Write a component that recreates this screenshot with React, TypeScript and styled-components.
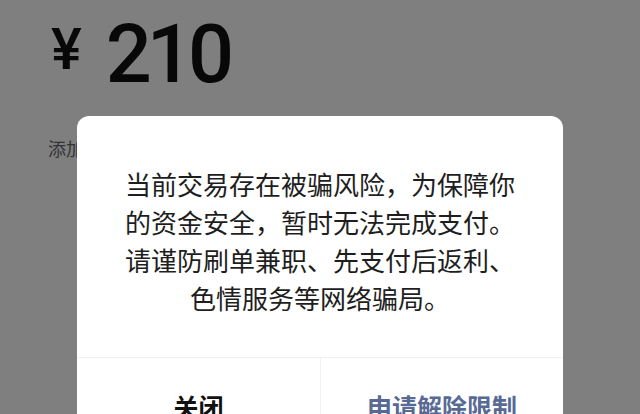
import React from "react";
import styled, { createGlobalStyle } from "styled-components";

const GlobalStyle = createGlobalStyle`
  html, body {
    margin: 0;
    padding: 0;
    background: #ffffff;
    overflow: hidden;
  }
  body {
    font-family: "Noto Sans CJK SC", "Noto Sans", sans-serif;
  }
`;

const Page = styled.div`
  width: 640px;
  height: 414px;
  padding: 16px 0 0 48px;
  box-sizing: border-box;
  display: flex;
  flex-direction: column;
  background: #ffffff;
`;

const Amount = styled.div`
  display: flex;
  align-items: flex-start;
  gap: 24px;
  color: #111;
  font-family: Roboto, "Liberation Sans", Arial, sans-serif;
  font-weight: 500;
`;

const Currency = styled.span`
  font-size: 58px;
  line-height: 58px;
  margin-top: 4px;
  margin-left: 3px;
`;

const Value = styled.span`
  font-size: 81px;
  line-height: 78px;
  letter-spacing: -5px;
`;

const AddNote = styled.div`
  margin-top: 44px;
  font-size: 18px;
  line-height: 20px;
  color: #666670;
`;

const Mask = styled.div`
  position: fixed;
  inset: 0;
  background: rgba(0, 0, 0, 0.5);
`;

const Dialog = styled.div`
  position: fixed;
  left: 77px;
  top: 116px;
  width: 486px;
  background: #ffffff;
  border-radius: 12px;
  display: flex;
  flex-direction: column;
`;

const Message = styled.p`
  margin: 0;
  padding: 49px 40px 40px;
  text-align: center;
  font-size: 26px;
  line-height: 38px;
  color: #1e1e1e;
  border-bottom: 1px solid #f0f0f0;
`;

const Actions = styled.div`
  display: grid;
  grid-template-columns: 1fr 1fr;
`;

const Action = styled.button<{ $primary?: boolean }>`
  height: 96px;
  border: 0;
  background: transparent;
  font-family: "Noto Sans CJK SC", sans-serif;
  font-size: 25px;
  font-weight: 600;
  color: ${(p) => (p.$primary ? "#586a94" : "#111")};
  padding: 0;
  & + & {
    border-left: 1px solid #f2f2f2;
  }
`;

export default function App() {
  return (
    <>
      <GlobalStyle />
      <Page>
        <Amount>
          <Currency>¥</Currency>
          <Value>210</Value>
        </Amount>
        <AddNote>添加转账说明</AddNote>
      </Page>
      <Mask />
      <Dialog>
        <Message>
          当前交易存在被骗风险，为保障你
          <br />
          的资金安全，暂时无法完成支付。
          <br />
          请谨防刷单兼职、先支付后返利、
          <br />
          色情服务等网络骗局。
        </Message>
        <Actions>
          <Action>关闭</Action>
          <Action $primary>申请解除限制</Action>
        </Actions>
      </Dialog>
    </>
  );
}
